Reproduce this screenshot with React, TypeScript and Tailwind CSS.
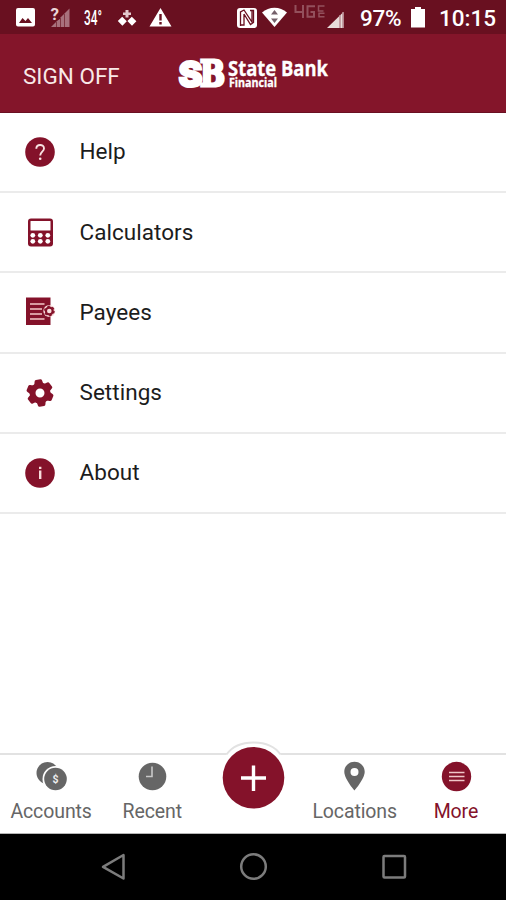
import type { ReactNode } from "react";

const MAROON = "#84122a";

function StatusBar() {
  return (
    <div className="flex h-[34px] items-start bg-[#691020] text-white">
      <svg width="230" height="34" viewBox="0 0 230 34" fill="#fff">
        <path
          fillRule="evenodd"
          d="M18 8h15a2 2 0 0 1 2 2v14.500a2 2 0 0 1-2 2H18a2 2 0 0 1-2-2V10a2 2 0 0 1 2-2zM19 23h13l-4-5-2.500 3-3-3z"
        />
        <path d="M69.500 8.500V27H51z" fill="#a8717c" />
        <path d="M56.500 22v5M60.500 18v9M64.500 14v13" stroke="#7f3541" />
        <path d="M49 6h11v13l-6 3h-5z" fill="#691020" />
        <text
          x="50.500"
          y="20"
          fontFamily="Roboto"
          fontSize="17"
          fontWeight="700"
          fill="#ead6d8"
        >
          ?
        </text>
        <text
          x="84"
          y="24.500"
          fontFamily="Roboto"
          fontSize="19.500"
          fontWeight="500"
          textLength="18"
          lengthAdjust="spacingAndGlyphs"
        >
          34°
        </text>
        <path d="M125.500 10h3v2.500h2.500v2.500h-2.500v2.500h-3V15H123v-2.500h2.500z" fill="#e3c9cd" />
        <path d="M122.200 16.700l4.600 4.600-4.400 4.400-4.600-4.600zM131.800 16.700l4.600 4.600-4.400 4.400-4.600-4.600z" />
        <path
          fillRule="evenodd"
          d="M160.500 8l11 18.500h-22zM159.300 14v6.500h2.400V14zM159.300 22v2.400h2.400V22z"
        />
      </svg>
      <svg width="124" height="34" viewBox="230 0 124 34" fill="#fff">
        <rect x="237" y="8" width="20" height="20" rx="3" />
        <path
          d="M240.500 26V12l3.500-2 8 12V10.500M244 14v11h-3M250 10.500h3.500v12l-3 2-6.500-10.500"
          fill="none"
          stroke="#691020"
          strokeWidth="1.300"
        />
        <path d="M262 12.500c7-6.500 18-6.500 25 0L274.500 27z" />
        <path
          d="M271 14.500l3.500-4.500 3.500 4.500zM271 18.500l3.500 4.500 3.500-4.500z"
          fill="#74606a"
        />
        <g fill="none" stroke="#93505c" strokeWidth="2">
          <path d="M295.500 5v7h8M303 5v13M315 6.200h-7.500v10.600h6.500V12h-3.500" />
          <path
            d="M324.500 6h-6v5h5M324.500 13.200h-5.500v3.500h5.500"
            strokeWidth="1.500"
          />
        </g>
        <path d="M343.500 12v16H327z" fill="#e8dcda" />
        <path d="M340 15v13M343 12v16" stroke="#b98b93" strokeWidth="1.500" />
      </svg>
      <div className="flex h-[34px] flex-1 items-center text-[22.500px] leading-none font-medium">
        <span className="ml-[6px] w-[50px] pt-[3px] tracking-[-0.300px]">97%</span>
        <svg width="16" height="22" viewBox="0 0 16 22" fill="#fff">
          <path d="M5 1h6v2h4v18.500H1V3h4z" />
        </svg>
        <span className="ml-[13px] pt-[3px]">10:15</span>
      </div>
    </div>
  );
}

function Header() {
  return (
    <header className="flex h-[79px] items-start border-b border-[#6a1022] bg-[#84152a] text-white">
      <button className="mt-[29px] ml-[23px] w-[149px] text-left text-[22.500px] leading-[27px] whitespace-nowrap text-[#f9e9e8]">
        SIGN OFF
      </button>
      <svg
        className="mt-2 overflow-visible"
        width="166"
        height="60"
        viewBox="172 42 166 60"
        fill="#fff"
      >
        <g stroke="#fff" strokeWidth="2">
          <text
            x="178.500"
            y="86.500"
            fontFamily="Inter"
            fontSize="36"
            fontWeight="900"
            textLength="24"
            lengthAdjust="spacingAndGlyphs"
          >
            S
          </text>
          <text
            x="200"
            y="86"
            fontFamily="DejaVu Serif"
            fontSize="35"
            fontWeight="700"
            strokeWidth="3"
            textLength="25"
            lengthAdjust="spacingAndGlyphs"
          >
            B
          </text>
        </g>
        <text
          x="228"
          y="76"
          fontFamily="Open Sans"
          fontSize="20.500"
          fontWeight="700"
          stroke="#fff"
          strokeWidth="0.300"
          textLength="100"
          lengthAdjust="spacingAndGlyphs"
        >
          State Bank
        </text>
        <text
          x="229"
          y="87"
          fontFamily="Open Sans"
          fontSize="12"
          fontWeight="700"
          stroke="#fff"
          strokeWidth="0.300"
          textLength="48"
          lengthAdjust="spacingAndGlyphs"
        >
          Financial
        </text>
      </svg>
    </header>
  );
}

function HelpIcon() {
  return (
    <svg width="32" height="32" viewBox="0 0 32 32" fill="none">
      <circle cx="16" cy="16" r="14.800" fill={MAROON} />
      <path
        d="M12.300 12.800c0-5 7.700-5 7.700-.3 0 3-3.800 3.400-3.800 7"
        stroke="#f8e3e2"
        strokeWidth="1.900"
      />
      <circle cx="16.200" cy="22.800" r="1.300" fill="#f8e3e2" />
    </svg>
  );
}

function CalculatorIcon() {
  return (
    <svg width="32" height="32" viewBox="0 0 32 32">
      <rect x="4" y="2.500" width="25" height="28" rx="3" fill={MAROON} />
      <rect x="6.500" y="5" width="20" height="9.500" rx="0.500" fill="#fff" />
      {[8.800, 16.300, 23.800].map((x) => (
        <g key={x} fill="#fff">
          <circle cx={x} cy="19.300" r="2.400" />
          <circle cx={x} cy="25.300" r="2.400" />
        </g>
      ))}
    </svg>
  );
}

function PayeesIcon() {
  return (
    <svg width="32" height="32" viewBox="0 0 32 32" fill="none">
      <path d="M2 1.500h24.500V29H2z" fill={MAROON} />
      <path
        d="M6 8h14.500M6 13h12M6 18h12M6 23h14.500"
        stroke="#f3c9c8"
        strokeWidth="1.700"
      />
      <circle cx="25.300" cy="15" r="6" fill="#f8dcdb" />
      <circle cx="25.300" cy="15" r="3.400" stroke={MAROON} strokeWidth="2.200" />
      <circle
        cx="25.300"
        cy="15"
        r="4.700"
        stroke={MAROON}
        strokeWidth="1.400"
        strokeDasharray="2.460 2.460"
      />
    </svg>
  );
}

function SettingsIcon() {
  return (
    <svg width="32" height="32" viewBox="0 0 32 32" fill="none">
      {[-8, 52, 112, 172, 232, 292].map((angle) => (
        <path
          key={angle}
          d="M11 9.500l1.200-5.500q.3-1.500 1.600-1.500h4.400q1.300 0 1.600 1.500l1.200 5.500z"
          fill={MAROON}
          transform={`rotate(${angle} 16 16)`}
        />
      ))}
      <circle cx="16" cy="16" r="7.500" stroke={MAROON} strokeWidth="6" />
    </svg>
  );
}

function AboutIcon() {
  return (
    <svg width="32" height="32" viewBox="0 0 32 32">
      <circle cx="16" cy="16" r="14.800" fill={MAROON} />
      <path d="M15 13.500h2.400V22H15zM15 9.700h2.400V12H15z" fill="#f8dcdb" />
    </svg>
  );
}

const menu: { label: string; icon: ReactNode }[] = [
  { label: "Help", icon: <HelpIcon /> },
  { label: "Calculators", icon: <CalculatorIcon /> },
  { label: "Payees", icon: <PayeesIcon /> },
  { label: "Settings", icon: <SettingsIcon /> },
  { label: "About", icon: <AboutIcon /> },
];

function Menu() {
  return (
    <ul className="h-[640px]">
      {menu.map((item) => (
        <li
          key={item.label}
          className="flex h-[80.200px] items-center border-b-2 border-[#ebebeb] pl-6"
        >
          <span className="w-[55.500px]">{item.icon}</span>
          <span className="pb-px text-[22.500px] leading-none tracking-[0.040px] text-[#1c1c1c]">
            {item.label}
          </span>
        </li>
      ))}
    </ul>
  );
}

function Tab({ label, children, active }: { label: string; children: ReactNode; active?: boolean }) {
  return (
    <button
      className={`flex flex-col items-center pt-[6px] pl-px text-[19.500px] leading-none tracking-[-0.100px] ${
        active ? "text-[#84122a]" : "text-[#666]"
      }`}
    >
      <svg width="32" height="32" viewBox="0 0 32 32" fill="none">
        {children}
      </svg>
      <span className="mt-[9px]">{label}</span>
    </button>
  );
}

function TabBar() {
  return (
    <nav className="relative grid h-[81px] grid-cols-5 border-t-2 border-b border-t-[#e2e2e2] border-b-[#b5b5b5] bg-white">
      <Tab label="Accounts">
        <circle cx="12.500" cy="12" r="11" fill="#666" />
        <circle cx="20.500" cy="18" r="13" fill="#fff" />
        <circle cx="20.500" cy="18" r="11.300" fill="#666" />
        <text
          x="20.500"
          y="21.800"
          fontFamily="Roboto"
          fontSize="10.500"
          fontWeight="700"
          textAnchor="middle"
          fill="#eee"
        >
          $
        </text>
      </Tab>
      <Tab label="Recent">
        <circle cx="16.500" cy="15.500" r="13.800" fill="#666" />
        <path d="M16 5.500v10H10" stroke="#c8c8c8" strokeWidth="1.600" />
      </Tab>
      <div>
        <svg
          className="absolute -top-[15px] left-[212px]"
          width="83"
          height="80"
          viewBox="212 740 83 80"
          fill="none"
        >
          <path
            d="M226.500 754.500c6-8.500 16-12 27-12s21 3.500 27 12v4h-54z"
            fill="#fff"
          />
          <path
            d="M226.500 754.500c6-8.500 16-12 27-12s21 3.500 27 12"
            stroke="#e2e2e2"
            strokeWidth="1.800"
          />
          <circle cx="253.500" cy="777.700" r="30.800" fill={MAROON} />
          <path d="M253.500 765.500v25.500M241 778h25" stroke="#fff" strokeWidth="3.400" />
        </svg>
      </div>
      <Tab label="Locations">
        <path
          fillRule="evenodd"
          d="M15.500.8c5.800 0 10.200 4.400 10.200 10 0 7.200-10.200 18.700-10.200 18.700S5.300 18 5.300 10.800c0-5.600 4.400-10 10.200-10zm0 6.200a4 4 0 1 0 0 8 4 4 0 0 0 0-8z"
          fill="#666"
        />
      </Tab>
      <Tab label="More" active>
        <circle cx="16.500" cy="15.500" r="14.700" fill={MAROON} />
        <path
          d="M9 11.500h15.500M9 15.500h15.500M9 19.500h15.500"
          stroke="#f0c6c8"
          strokeWidth="1.500"
        />
      </Tab>
    </nav>
  );
}

function NavigationBar() {
  return (
    <div className="h-[66px] bg-black">
      <svg
        width="506"
        height="66"
        viewBox="0 834 506 66"
        fill="none"
        stroke="#7c7c7c"
        strokeWidth="2.500"
      >
        <path d="M123.500 855v23.500L103 866.800z" strokeLinejoin="round" />
        <circle cx="253.500" cy="866.500" r="12.300" />
        <rect x="383.500" y="856" width="21.500" height="21.500" rx="1" />
      </svg>
    </div>
  );
}

export default function App() {
  return (
    <div className="flex h-[900px] w-[506px] flex-col overflow-hidden bg-white font-['Roboto',sans-serif]">
      <StatusBar />
      <Header />
      <Menu />
      <TabBar />
      <NavigationBar />
    </div>
  );
}
